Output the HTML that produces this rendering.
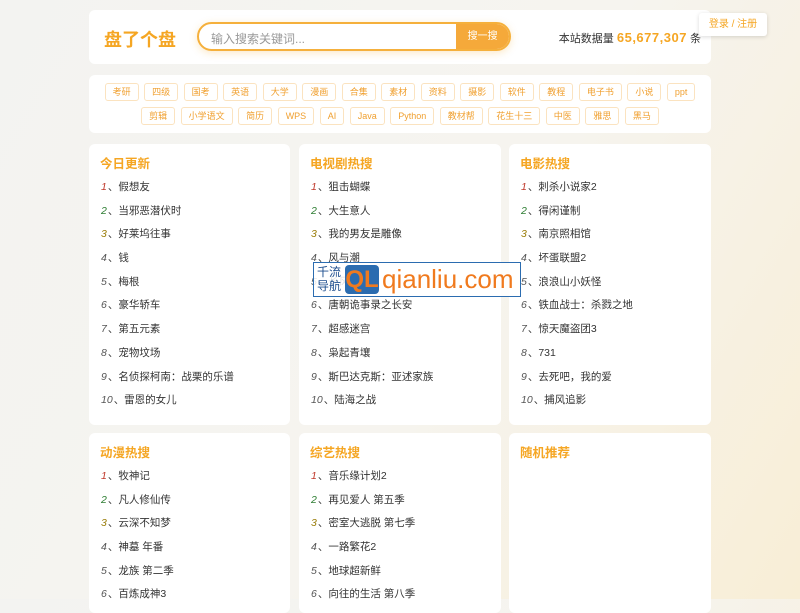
<!DOCTYPE html><html><head><meta charset="utf-8"><style>
*{margin:0;padding:0;box-sizing:border-box}
body{width:800px;height:599px;overflow:hidden;font-family:"Liberation Sans","Noto Sans CJK SC",sans-serif;background:linear-gradient(120deg,#f3f3f1 0%,#f6f4ef 55%,#f8eed6 100%);position:relative}
.card{position:absolute;background:#fff;border-radius:6px}
.logo{position:absolute;left:15px;top:16px;font-size:18px;font-weight:bold;color:#f5a623}
.search{position:absolute;left:108px;top:12px;width:314px;height:29px;border:2px solid #f5b03c;border-radius:15px;overflow:hidden;box-shadow:0 2px 8px rgba(245,166,35,.25)}
.search span{position:absolute;left:12px;top:6px;font-size:12px;color:#999}
.search b{position:absolute;right:0;top:0;width:53px;height:100%;background:#f5a93a;color:#fff;font-size:10px;font-weight:normal;line-height:25px;text-align:center}
.stat{position:absolute;right:10px;top:20px;font-size:11px;color:#333}
.stat em{font-style:normal;color:#f5a623;font-weight:bold;font-size:13px;letter-spacing:.5px}
.login{position:absolute;left:699px;top:13px;width:68px;height:23px;background:#fff;border-radius:3px;box-shadow:0 1px 4px rgba(0,0,0,.15);font-size:10px;color:#f5a623;text-align:center;line-height:23px}
.tags{display:flex;justify-content:center;gap:5.5px;margin-top:8px}
.tags+.tags{margin-top:6px}
.tags i{font-style:normal;font-size:9px;color:#f0a030;border:1px solid #fbe3c0;border-radius:3px;height:18px;line-height:16px;padding:0 7px}
.t{position:absolute;left:11px;top:9px;font-size:12.5px;font-weight:bold;color:#f5a623}
ol{list-style:none;position:absolute;left:12px;top:35px}
li{font-size:10.5px;color:#333;height:23.7px}
li s{text-decoration:none;font-style:italic;color:#555;margin-right:1px}
li:nth-child(1) s{color:#c0392b}li:nth-child(2) s{color:#2e7d32}li:nth-child(3) s{color:#9a7d0a}
.wm{position:absolute;left:313px;top:262px;width:208px;height:35px;border:1.5px solid #2b6cb0;background:rgba(255,255,255,.85)}
</style></head><body>
<div class="card" style="left:89px;top:10px;width:622px;height:54px">
<div class="logo">盘了个盘</div>
<div class="search"><span>输入搜索关键词...</span><b>搜一搜</b></div>
<div class="stat">本站数据量 <em>65,677,307</em> 条</div>
</div>
<div class="login">登录 / 注册</div>
<div class="card" style="left:89px;top:75px;width:622px;height:58px"><div class="tags">
<i>考研</i><i>四级</i><i>国考</i><i>英语</i><i>大学</i><i>漫画</i><i>合集</i><i>素材</i><i>资料</i><i>摄影</i><i>软件</i><i>教程</i><i>电子书</i><i>小说</i><i>ppt</i></div><div class="tags"><i>剪辑</i><i>小学语文</i><i>简历</i><i>WPS</i><i>AI</i><i>Java</i><i>Python</i><i>教材帮</i><i>花生十三</i><i>中医</i><i>雅思</i><i>黑马</i></div></div>
<div class="card" style="left:89px;top:144px;width:201px;height:281px"><div class="t">今日更新</div><ol>
<li><s>1</s>、假想友</li><li><s>2</s>、当邪恶潜伏时</li><li><s>3</s>、好莱坞往事</li><li><s>4</s>、钱</li><li><s>5</s>、梅根</li><li><s>6</s>、豪华轿车</li><li><s>7</s>、第五元素</li><li><s>8</s>、宠物坟场</li><li><s>9</s>、名侦探柯南：战栗的乐谱</li><li><s>10</s>、雷恩的女儿</li></ol></div>
<div class="card" style="left:299px;top:144px;width:202px;height:281px"><div class="t">电视剧热搜</div><ol>
<li><s>1</s>、狙击蝴蝶</li><li><s>2</s>、大生意人</li><li><s>3</s>、我的男友是雕像</li><li><s>4</s>、风与潮</li><li><s>5</s>、长风渡传</li><li><s>6</s>、唐朝诡事录之长安</li><li><s>7</s>、超感迷宫</li><li><s>8</s>、枭起青壤</li><li><s>9</s>、斯巴达克斯：亚述家族</li><li><s>10</s>、陆海之战</li></ol></div>
<div class="card" style="left:509px;top:144px;width:202px;height:281px"><div class="t">电影热搜</div><ol>
<li><s>1</s>、刺杀小说家2</li><li><s>2</s>、得闲谨制</li><li><s>3</s>、南京照相馆</li><li><s>4</s>、坏蛋联盟2</li><li><s>5</s>、浪浪山小妖怪</li><li><s>6</s>、铁血战士：杀戮之地</li><li><s>7</s>、惊天魔盗团3</li><li><s>8</s>、731</li><li><s>9</s>、去死吧，我的爱</li><li><s>10</s>、捕风追影</li></ol></div>
<div class="card" style="left:89px;top:433px;width:201px;height:180px"><div class="t">动漫热搜</div><ol>
<li><s>1</s>、牧神记</li><li><s>2</s>、凡人修仙传</li><li><s>3</s>、云深不知梦</li><li><s>4</s>、神墓 年番</li><li><s>5</s>、龙族 第二季</li><li><s>6</s>、百炼成神3</li></ol></div>
<div class="card" style="left:299px;top:433px;width:202px;height:180px"><div class="t">综艺热搜</div><ol>
<li><s>1</s>、音乐缘计划2</li><li><s>2</s>、再见爱人 第五季</li><li><s>3</s>、密室大逃脱 第七季</li><li><s>4</s>、一路繁花2</li><li><s>5</s>、地球超新鲜</li><li><s>6</s>、向往的生活 第八季</li></ol></div>
<div class="card" style="left:509px;top:433px;width:202px;height:180px"><div class="t">随机推荐</div></div>
<div class="wm">
<div style="position:absolute;left:3px;top:2px;font-size:12px;line-height:14px;color:#1f4f8f">千流<br>导航</div>
<div style="position:absolute;left:31px;top:2px;width:34px;height:29px;background:#2b6cb0;border-radius:4px;color:#f07a1e;font-weight:bold;font-size:24px;line-height:29px;text-align:center">QL</div>
<div style="position:absolute;left:68px;top:0;font-size:26px;color:#f07a1e;line-height:32px">qianliu.com</div>
</div>
</body></html>
